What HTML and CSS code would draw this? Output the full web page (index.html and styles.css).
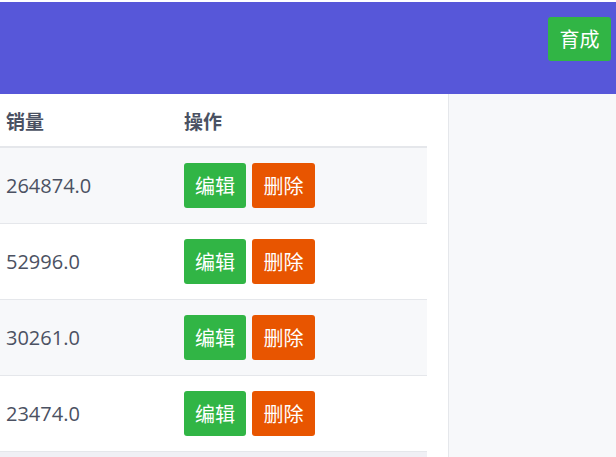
FILE: index.html
```html
<!DOCTYPE html>
<html lang="zh">
<head>
    <meta charset="UTF-8">
    <meta name="viewport" content="width=device-width, initial-scale=1.0">
    <title>销量</title>
    <link rel="stylesheet" href="styles.css">
</head>
<body>

    <!-- Barra superior -->
    <div class="topbar">
        <button class="btn btn-verde btn-top">育成</button>
    </div>

    <div class="contenido">
        <div class="panel-tabla">
            <table class="tabla">
                <thead>
                    <tr>
                        <th class="col-ventas">销量</th>
                        <th>操作</th>
                    </tr>
                </thead>
                <tbody>
                    <tr class="par">
                        <td>264874.0</td>
                        <td><button class="btn btn-verde">编辑</button><button class="btn btn-naranja">删除</button></td>
                    </tr>
                    <tr>
                        <td>52996.0</td>
                        <td><button class="btn btn-verde">编辑</button><button class="btn btn-naranja">删除</button></td>
                    </tr>
                    <tr class="par">
                        <td>30261.0</td>
                        <td><button class="btn btn-verde">编辑</button><button class="btn btn-naranja">删除</button></td>
                    </tr>
                    <tr>
                        <td>23474.0</td>
                        <td><button class="btn btn-verde">编辑</button><button class="btn btn-naranja">删除</button></td>
                    </tr>
                    <tr class="par">
                        <td>&nbsp;</td>
                        <td>&nbsp;</td>
                    </tr>
                </tbody>
            </table>
        </div>
        <div class="panel-lateral"></div>
    </div>

</body>
</html>
```

FILE: styles.css
```css
body {
    font-family: 'Open Sans', 'Noto Sans CJK SC', sans-serif;
    margin: 0;
    padding-top: 2px;
    background-color: #fff;
    color: #4b5162;
    overflow: hidden;
    height: 100vh;
    box-sizing: border-box;
    display: flex;
    flex-direction: column;
}

.topbar {
    height: 92px;
    flex-shrink: 0;
    background-color: #5757d9;
    display: flex;
    justify-content: flex-end;
    align-items: flex-start;
    padding: 15px 5px 0 0;
    box-sizing: border-box;
}

.btn {
    font-family: 'Noto Sans CJK SC', sans-serif;
    font-size: 20px;
    color: #fff;
    border: none;
    border-radius: 3px;
    height: 45px;
    width: 62px;
    padding: 0;
    cursor: pointer;
    line-height: 1;
}

.btn-top {
    width: 63px;
    height: 44px;
}

.btn-verde {
    background-color: #31b545;
}

.btn-naranja {
    background-color: #e85500;
    margin-left: 6px;
    width: 63px;
}

.contenido {
    display: flex;
    flex: 1;
    min-height: 0;
}

.panel-tabla {
    width: 448px;
    background-color: #fff;
}

.panel-lateral {
    flex: 1;
    background-color: #f7f8fa;
    border-left: 1px solid #e5e7eb;
}

.tabla {
    width: 427px;
    border-collapse: collapse;
}

.tabla th {
    text-align: left;
    font-family: 'Noto Sans CJK SC', sans-serif;
    font-weight: bold;
    font-size: 19px;
    color: #4a5162;
    height: 52px;
    padding: 0 6px;
    border-bottom: 2px solid #e5e7eb;
}

.tabla .col-ventas {
    width: 166px;
}

.tabla td {
    height: 75px;
    padding: 0 6px;
    font-size: 20px;
    border-bottom: 1px solid #e5e7eb;
}

.tabla tr.par td {
    background-color: #f7f8fa;
}

.tabla tr:last-child td {
    background-color: #f0f0f5;
}
```
